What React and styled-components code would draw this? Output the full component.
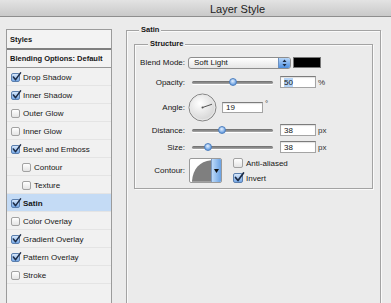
import React from "react";
import styled, { createGlobalStyle } from "styled-components";

const Global = createGlobalStyle`
  html, body { margin: 0; padding: 0; background: #ebebeb; }
  body { font-family: "Liberation Sans", Arial, sans-serif; color: #161616; overflow: hidden; }
`;

const Window = styled.div`
  width: 391px;
  height: 303px;
  overflow: hidden;
  display: flex;
  flex-direction: column;
  background: #ebebeb;
`;

const TitleBar = styled.div`
  flex: none;
  height: 17px;
  box-sizing: border-box;
  border-bottom: 1px solid #8e8e8e;
  background: linear-gradient(#e3e3e3, #c9c9c9);
  display: flex;
  align-items: center;
  padding: 2px 0 0 210px;
  font-size: 11px;
  color: #222;
`;

const Body = styled.div`
  display: flex;
  align-items: flex-start;
  padding: 8px 0 0 6px;
`;

const StyleList = styled.div`
  flex: none;
  width: 104px;
  height: 300px;
  margin-top: 4px;
  border: 1px solid #9b9b9b;
  border-bottom: none;
  background: #f1f1f1;
  display: flex;
  flex-direction: column;
`;

const HeadRow = styled.div`
  height: ${(p) => p.$h}px;
  display: flex;
  align-items: center;
  padding-left: 3px;
  font-size: 7.5px;
  font-weight: bold;
  border-bottom: ${(p) => p.$sep};
  background: #f3f3f3;
`;

const Item = styled.div`
  height: 18px;
  flex: none;
  display: flex;
  align-items: center;
  padding-left: ${(p) => (p.$indent ? 15 : 4)}px;
  font-size: 8px;
  font-weight: ${(p) => (p.$active ? "bold" : "normal")};
  background: ${(p) => (p.$active ? "#c4dbf5" : "transparent")};
  box-shadow: inset 0 -1px 0 #e4e4e4;
`;

const Box = styled.span`
  flex: none;
  position: relative;
  width: ${(p) => p.$s}px;
  height: ${(p) => p.$s}px;
  box-sizing: border-box;
  border-radius: 2px;
  border: 1px solid ${(p) => (p.$on ? "#5b7fae" : "#a2a2a2")};
  background: ${(p) =>
    p.$on ? "linear-gradient(#d6e7fb, #76a8e6)" : "linear-gradient(#ffffff, #e4e4e4)"};
  margin-right: 3px;
  svg { position: absolute; left: 0; top: -2px; overflow: visible; }
`;

function Check({ on, size = 9 }) {
  return (
    <Box $on={on} $s={size}>
      {on && (
        <svg width={size} height={size} viewBox="0 0 10 10">
          <path d="M1.5 5.5 L4 8.5 L9.5 1" fill="none" stroke="#1b2a44" strokeWidth="1.7" strokeLinecap="round" strokeLinejoin="round" />
        </svg>
      )}
    </Box>
  );
}

const Group = styled.section`
  flex: none;
  display: flex;
  flex-direction: column;
  margin: ${(p) => p.$m};
  border: 1px solid #a3a3a3;
  box-shadow: inset 1px 1px 0 #fafafa, 1px 1px 0 #fafafa;
  padding: ${(p) => p.$pad};
  height: ${(p) => p.$h || "auto"};
  width: ${(p) => p.$w || "auto"};
  box-sizing: border-box;
`;

const GroupTitle = styled.h3`
  align-self: flex-start;
  margin: -6px 0 0 ${(p) => p.$ml}px;
  padding: 0 2px;
  font-size: 7.5px;
  font-weight: bold;
  line-height: 10px;
  height: 10px;
  background: #ebebeb;
`;

const Row = styled.div`
  display: flex;
  align-items: center;
  height: ${(p) => p.$h}px;
  margin-top: ${(p) => p.$mt || 0}px;
`;

const Label = styled.span`
  flex: none;
  width: 50px;
  margin-right: 3px;
  text-align: right;
  font-size: 8px;
`;

const Select = styled.div`
  flex: none;
  width: 103px;
  height: 12px;
  box-sizing: border-box;
  border: 1px solid #8d8d8d;
  border-radius: 3px;
  background: linear-gradient(#ffffff, #e6e6e6);
  display: flex;
  align-items: center;
  font-size: 8px;
  padding-left: 5px;
  overflow: hidden;
`;

const Stepper = styled.span`
  margin-left: auto;
  width: 11px;
  height: 100%;
  background: linear-gradient(#b7d6f8, #4d8fe0);
  border-left: 1px solid #6a8fc0;
  display: flex;
  align-items: center;
  justify-content: center;
`;

const Swatch = styled.div`
  flex: none;
  width: 28px;
  height: 11px;
  margin-left: 2px;
  box-sizing: border-box;
  border: 1px solid #777;
  background: #000;
`;

const Track = styled.div`
  flex: none;
  position: relative;
  width: 81px;
  height: 3px;
  margin-left: 4px;
  border-radius: 2px;
  background: linear-gradient(#6b6b6b, #a9a9a9);
  box-shadow: 0 1px 0 #fff;
`;

const Thumb = styled.span`
  position: absolute;
  top: 50%;
  width: 8px;
  height: 8px;
  margin: -4px 0 0 -4px;
  box-sizing: border-box;
  border-radius: 50%;
  border: 1px solid #4d7fbf;
  background: radial-gradient(circle at 45% 35%, #e4f0ff, #6da2e2 70%);
`;

const Field = styled.div`
  flex: none;
  width: ${(p) => p.$w}px;
  height: ${(p) => p.$h}px;
  margin-left: ${(p) => p.$ml}px;
  box-sizing: border-box;
  border: 1px solid #a4a4a4;
  border-top-color: #7c7c7c;
  background: #fff;
  box-shadow: inset 0 1px 1px rgba(0, 0, 0, 0.12);
  display: flex;
  align-items: center;
  padding-left: 3px;
  font-size: 8px;
`;

const Sel = styled.span`
  background: #b5d4f7;
`;

const Unit = styled.span`
  font-size: 8px;
  margin-left: 2px;
  align-self: ${(p) => (p.$top ? "flex-start" : "center")};
  margin-top: ${(p) => (p.$top ? 6 : 0)}px;
  color: #333;
`;

const Dial = styled.svg`
  flex: none;
  display: block;
`;

const ContourBox = styled.div`
  flex: none;
  display: flex;
  width: 33px;
  height: 25px;
  margin-left: 1px;
  box-sizing: border-box;
  border: 1px solid #9a9a9a;
  background: #fff;
  border-radius: 2px;
  overflow: hidden;
`;

const DropBtn = styled.span`
  margin-left: auto;
  width: 9px;
  height: 100%;
  background: linear-gradient(90deg, #bcd9f8, #6aa2e4);
  border-left: 1px solid #7c9ac2;
  display: flex;
  align-items: center;
  justify-content: center;
`;

const CheckCol = styled.div`
  margin-left: 11px;
  display: flex;
  flex-direction: column;
  gap: 5px;
`;

const CheckRow = styled.div`
  display: flex;
  align-items: center;
  height: 10px;
  font-size: 8px;
`;

function Slider({ at }) {
  return (
    <Track>
      <Thumb style={{ left: at }} />
    </Track>
  );
}

const items = [
  { t: "Drop Shadow", on: true },
  { t: "Inner Shadow", on: true },
  { t: "Outer Glow" },
  { t: "Inner Glow" },
  { t: "Bevel and Emboss", on: true },
  { t: "Contour", indent: true },
  { t: "Texture", indent: true },
  { t: "Satin", on: true, active: true },
  { t: "Color Overlay" },
  { t: "Gradient Overlay", on: true },
  { t: "Pattern Overlay", on: true },
  { t: "Stroke" },
];

export default function App() {
  const a = (19 * Math.PI) / 180;
  return (
    <Window>
      <Global />
      <TitleBar>Layer Style</TitleBar>
      <Body>
        <StyleList>
          <HeadRow $h={18} $sep="2px solid #7f7f7f">Styles</HeadRow>
          <HeadRow $h={17} $sep="1px solid #979797">Blending Options: Default</HeadRow>
          {items.map((it) => (
            <Item key={it.t} $indent={it.indent} $active={it.active}>
              <Check on={!!it.on} />
              {it.t}
            </Item>
          ))}
        </StyleList>
        <Group $m="5px 0 0 14px" $pad="0 7px 0 7px" $h="300px" $w="255px">
          <GroupTitle $ml={5}>Satin</GroupTitle>
          <Group $m="9px 0 0 0" $pad="0 0 5px 0">
            <GroupTitle $ml={13}>Structure</GroupTitle>
            <Row $h={13} $mt={7}>
              <Label>Blend Mode:</Label>
              <Select>
                Soft Light
                <Stepper>
                  <svg width="5" height="8" viewBox="0 0 5 8">
                    <path d="M2.5 0.5 L4.5 3 L0.5 3 Z M2.5 7.5 L4.5 5 L0.5 5 Z" fill="#1d2a40" />
                  </svg>
                </Stepper>
              </Select>
              <Swatch />
            </Row>
            <Row $h={12} $mt={7}>
              <Label>Opacity:</Label>
              <Slider at={41} />
              <Field $w={36} $h={12} $ml={7}>
                <Sel>50</Sel>
              </Field>
              <Unit>%</Unit>
            </Row>
            <Row $h={29} $mt={5}>
              <Label>Angle:</Label>
              <Dial width="29" height="29" viewBox="0 0 29 29">
                <defs>
                  <radialGradient id="dg" cx="40%" cy="35%" r="70%">
                    <stop offset="0" stopColor="#ffffff" />
                    <stop offset="1" stopColor="#d2d2d2" />
                  </radialGradient>
                </defs>
                <circle cx="14.5" cy="14.5" r="13.5" fill="url(#dg)" stroke="#858585" strokeWidth="1" />
                <circle cx="14.5" cy="14.5" r="12.3" fill="none" stroke="#e9e9e9" strokeWidth="1" />
                <line x1="14.5" y1="14.5" x2={14.5 + 10 * Math.cos(a)} y2={14.5 - 10 * Math.sin(a)} stroke="#555" strokeWidth="1" />
                <circle cx="14.5" cy="14.5" r="1" fill="#555" />
              </Dial>
              <Field $w={41} $h={11} $ml={5}>19</Field>
              <Unit $top>°</Unit>
            </Row>
            <Row $h={12} $mt={2}>
              <Label>Distance:</Label>
              <Slider at={30} />
              <Field $w={36} $h={12} $ml={7}>38</Field>
              <Unit>px</Unit>
            </Row>
            <Row $h={12} $mt={5}>
              <Label>Size:</Label>
              <Slider at={16} />
              <Field $w={36} $h={12} $ml={7}>38</Field>
              <Unit>px</Unit>
            </Row>
            <Row $h={25} $mt={5}>
              <Label>Contour:</Label>
              <ContourBox>
                <svg width="22" height="23" viewBox="0 0 22 23">
                  <path d="M2 23 C3 10 10 2 22 1 L22 23 Z" fill="#7f7f7f" />
                </svg>
                <DropBtn>
                  <svg width="5" height="4" viewBox="0 0 5 4">
                    <path d="M0 0 L5 0 L2.5 4 Z" fill="#111" />
                  </svg>
                </DropBtn>
              </ContourBox>
              <CheckCol>
                <CheckRow>
                  <Check on={false} size={10} />
                  Anti-aliased
                </CheckRow>
                <CheckRow>
                  <Check on size={10} />
                  Invert
                </CheckRow>
              </CheckCol>
            </Row>
          </Group>
        </Group>
      </Body>
    </Window>
  );
}
